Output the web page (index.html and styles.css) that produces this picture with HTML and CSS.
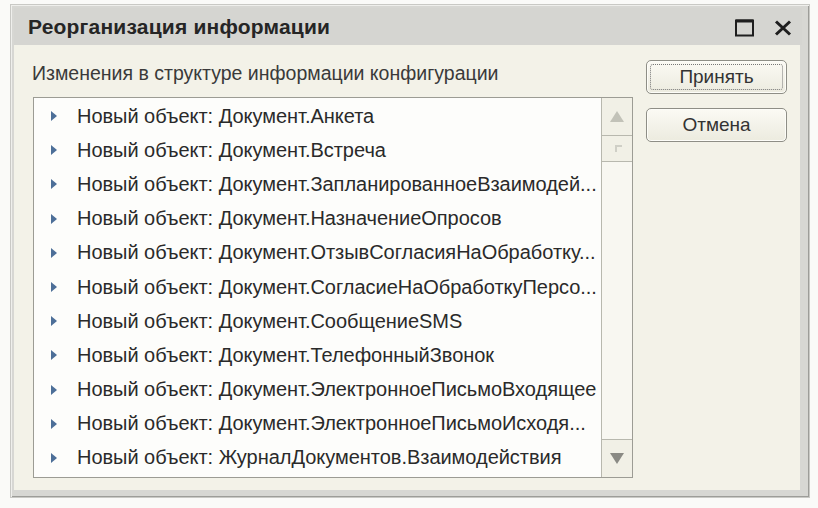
FILE: index.html
```html
<!DOCTYPE html>
<html lang="ru">
<head>
<meta charset="utf-8">
<title>Реорганизация информации</title>
<link rel="stylesheet" href="styles.css">
</head>
<body>
<div class="window">
  <div class="titlebar">
    <div class="title">Реорганизация информации</div>
    <div class="tb-buttons">
      <svg class="tb-max" width="20" height="18" viewBox="0 0 20 18"><rect x="1" y="1.5" width="17" height="15" fill="none" stroke="#1e1e1e" stroke-width="2"/><line x1="1" y1="2" x2="18" y2="2" stroke="#1e1e1e" stroke-width="3"/></svg>
      <svg class="tb-close" width="18" height="16" viewBox="0 0 18 16"><path d="M2 1.5 L16 14.5 M16 1.5 L2 14.5" stroke="#1e1e1e" stroke-width="3" stroke-linecap="butt"/></svg>
    </div>
  </div>
  <div class="content">
    <div class="main">
      <div class="label">Изменения в структуре информации конфигурации</div>
      <div class="listbox">
        <div class="rows">
          <div class="row"><span class="arrow"></span><span class="text">Новый объект: Документ.Анкета</span></div>
          <div class="row"><span class="arrow"></span><span class="text">Новый объект: Документ.Встреча</span></div>
          <div class="row"><span class="arrow"></span><span class="text">Новый объект: Документ.ЗапланированноеВзаимодей...</span></div>
          <div class="row"><span class="arrow"></span><span class="text">Новый объект: Документ.НазначениеОпросов</span></div>
          <div class="row"><span class="arrow"></span><span class="text">Новый объект: Документ.ОтзывСогласияНаОбработку...</span></div>
          <div class="row"><span class="arrow"></span><span class="text">Новый объект: Документ.СогласиеНаОбработкуПерсо...</span></div>
          <div class="row"><span class="arrow"></span><span class="text">Новый объект: Документ.СообщениеSMS</span></div>
          <div class="row"><span class="arrow"></span><span class="text">Новый объект: Документ.ТелефонныйЗвонок</span></div>
          <div class="row"><span class="arrow"></span><span class="text">Новый объект: Документ.ЭлектронноеПисьмоВходящее</span></div>
          <div class="row"><span class="arrow"></span><span class="text">Новый объект: Документ.ЭлектронноеПисьмоИсходя...</span></div>
          <div class="row"><span class="arrow"></span><span class="text">Новый объект: ЖурналДокументов.Взаимодействия</span></div>
        </div>
        <div class="scrollbar">
          <div class="sb-btn sb-up"><span class="tri-up"></span></div>
          <div class="sb-thumb"><span class="grip"></span></div>
          <div class="sb-track"></div>
          <div class="sb-btn sb-down"><span class="tri-down"></span></div>
        </div>
      </div>
    </div>
    <div class="side">
      <button class="btn btn-default"><span class="focus">Принять</span></button>
      <button class="btn"><span class="focus-none">Отмена</span></button>
    </div>
  </div>
</div>
</body>
</html>
```
FILE: styles.css
```css
html, body {
  margin: 0;
  padding: 0;
  background: #fafaf8;
}
body {
  font-family: "Liberation Sans", Arial, sans-serif;
  color: #2b2b2b;
  padding: 4px 0 0 10px;
}
.window {
  width: 800px;
  height: 494px;
  border: 1px solid #c9c9c5;
  background: #d7d7d3;
  padding: 3px 7px 9px 3px;
  box-sizing: border-box;
  box-shadow: inset 1px 1px 0 #efefec, inset -1px -1px 0 #9d9d99;
  display: flex;
  flex-direction: column;
}
.titlebar {
  height: 37px;
  display: flex;
  align-items: center;
  justify-content: space-between;
  padding: 0 10px 0 14px;
  background: #d5d5d1;
  flex: none;
}
.title {
  font-weight: bold;
  font-size: 21px;
  color: #252525;
  letter-spacing: 0.2px;
}
.tb-buttons {
  display: flex;
  align-items: center;
  gap: 19px;
  padding-top: 2px;
}
.content {
  flex: 1;
  background: #f3f2e8;
  display: flex;
  padding: 14px 13px 12px 19px;
  margin-right: 2px;
  gap: 13px;
}
.main {
  width: 604px;
  display: flex;
  flex-direction: column;
}
.label {
  font-size: 19.5px;
  line-height: 28px;
  color: #3a3a3a;
  margin-bottom: 10px;
  margin-left: -1px;
}
.listbox {
  height: 381px;
  box-sizing: border-box;
  border: 1px solid #9c9c94;
  background: #fdfdfb;
  display: flex;
}
.rows {
  flex: 1;
  padding-top: 1px;
  overflow: hidden;
}
.row {
  height: 34.2px;
  display: flex;
  align-items: center;
  white-space: nowrap;
}
.arrow {
  width: 0;
  height: 0;
  border-left: 6px solid #4d6f98;
  border-top: 5px solid transparent;
  border-bottom: 5px solid transparent;
  margin-left: 17px;
  margin-right: 20px;
  flex: none;
}
.text {
  font-size: 20px;
  color: #2a2a2a;
  letter-spacing: -0.03px;
}
.scrollbar {
  width: 30px;
  flex: none;
  border-left: 1px solid #b8b8ae;
  background: #f5f4ec;
  display: flex;
  flex-direction: column;
}
.sb-btn {
  height: 37px;
  display: flex;
  align-items: center;
  justify-content: center;
  background: #f1f0e6;
  flex: none;
}
.sb-up { border-bottom: 1px solid #b8b8ae; }
.sb-down { border-top: 1px solid #b8b8ae; }
.tri-up {
  width: 0; height: 0;
  border-bottom: 11px solid #c2c2b8;
  border-left: 7px solid transparent;
  border-right: 7px solid transparent;
}
.tri-down {
  width: 0; height: 0;
  border-top: 11px solid #8a8a84;
  border-left: 7px solid transparent;
  border-right: 7px solid transparent;
}
.sb-thumb {
  height: 25px;
  border-bottom: 1px solid #b8b8ae;
  background: #f1f0e6;
  display: flex;
  align-items: center;
  justify-content: center;
  flex: none;
}
.grip {
  width: 5px;
  height: 5px;
  border-top: 2px solid #cfcfc6;
  border-left: 2px solid #cfcfc6;
  margin-left: 2px;
}
.sb-track {
  flex: 1;
  background: #f8f7f1;
}
.side {
  width: 141px;
  display: flex;
  flex-direction: column;
  gap: 14px;
  padding-top: 1px;
}
.btn {
  height: 34px;
  width: 141px;
  border: 1px solid #8e8e86;
  border-radius: 5px;
  background: linear-gradient(#fbfaf4, #ecebdf);
  font-family: "Liberation Sans", Arial, sans-serif;
  font-size: 19px;
  color: #333;
  padding: 3px;
  box-shadow: inset 0 0 0 1px #fdfdf8;
  display: flex;
}
.focus, .focus-none {
  flex: 1;
  display: flex;
  align-items: center;
  justify-content: center;
  border-radius: 3px;
}
.focus {
  border: 1px dotted #777;
}
.focus-none {
  border: 1px solid transparent;
}
```
